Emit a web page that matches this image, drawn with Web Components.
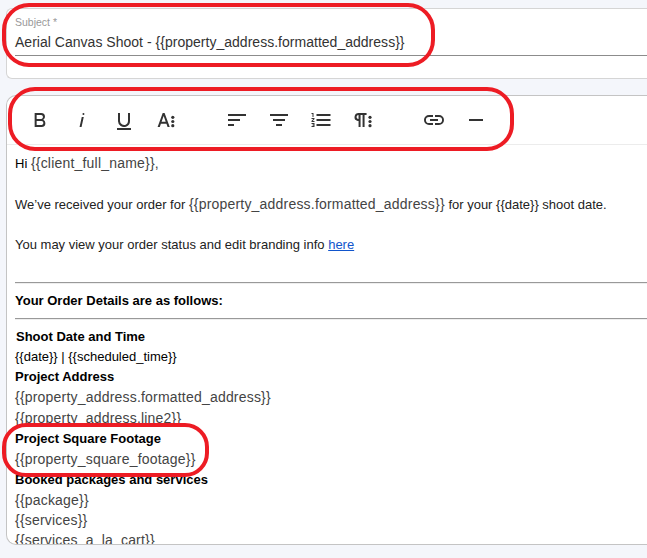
<!DOCTYPE html>
<html lang="en">
<head>
<meta charset="utf-8">
<title>Email template</title>
<style>
html,body{margin:0;height:100%;overflow:hidden;background:#f4f6fb}
body{font-family:"Liberation Sans",Arial,sans-serif;color:#222}
</style>
</head>
<body>
<template-editor></template-editor>
<script>
const define = (name, html, after) => customElements.define(name, class extends HTMLElement {
  connectedCallback() {
    if (this.shadowRoot) return;
    this.attachShadow({mode: 'open'}).innerHTML = html;
    if (after) after(this, this.shadowRoot);
  }
});

const ICONS = {
  bold: 'M15.25,11.8A3.68,3.68,0,0,0,17,9a3.93,3.93,0,0,0-3.86-4H6.65V19h7a3.74,3.74,0,0,0,3.7-3.78V15.1A3.64,3.64,0,0,0,15.25,11.8ZM8.65,7h4.2a2.09,2.09,0,0,1,2,1.3,2.09,2.09,0,0,1-1.37,2.61,2.23,2.23,0,0,1-.63.09H8.65Zm4.6,10H8.65V13h4.6a2.09,2.09,0,0,1,2,1.3,2.09,2.09,0,0,1-1.37,2.61A2.23,2.23,0,0,1,13.25,17Z',
  italic: 'M11.76,9h2l-2.2,10h-2ZM13.44,5a1,1,0,1,0,1,1,1,1,0,0,0-1-1Z',
  underline: 'M19,20v2H5V20ZM16,13.2a4,4,0,0,1-5.74,3.4A3.75,3.75,0,0,1,8,13.08V5H6v8.2a6,6,0,0,0,8,5.44A5.85,5.85,0,0,0,18,13V5H16Z',
  textMore: 'M13.55,19h2.2L10.6,5H8.7L3.6,19h2.2l1.1-3.2h5.55ZM7.6,13.8,9.65,7.9l2.05,5.9Z',
  left: 'M3,18h6V16H3ZM3,6V8H21V6ZM3,13H15V11H3Z',
  center: 'M9,18h6V16H9ZM6,11v2H18V11ZM3,6V8H21V6Z',
  list: 'M2.5,16h2v.5h-1v1h1V18h-2v1h3V15h-3ZM3.5,9h1V5h-2V6h1ZM2.5,11H4.3L2.5,13.1V14h3V13H3.7l1.8-2.1V10h-3ZM7.5,6V8h14V6ZM7.5,18h14V16H7.5ZM7.5,13h14V11H7.5Z',
  paragraph: 'M7.68,5A4.11,4.11,0,0,0,3.61,8.18,4,4,0,0,0,6.72,12.9a3.77,3.77,0,0,0,.85.1v6h2V7h2V19h2V7h2V5ZM5.53,9a2,2,0,0,1,2-2v4A2,2,0,0,1,5.53,9Z',
  link: 'M3.9,12A3.1,3.1,0,0,1,7,8.9h4V7H7A5,5,0,0,0,7,17h4V15.1H7A3.1,3.1,0,0,1,3.9,12ZM8,13h8V11H8ZM17,7H13V8.9h4a3.1,3.1,0,0,1,0,6.2H13V17h4A5,5,0,0,0,17,7Z',
  rule: 'M5,11h14v2H5Z'
};
define('tool-icon', `<style>:host{display:block;width:24px;height:24px}svg{display:block}</style><svg width="24" height="24" viewBox="0 0 24 24" fill="#333"><path/></svg>`,
  (el, root) => {
    const n = el.getAttribute('name'), p = root.querySelector('path');
    p.setAttribute('d', ICONS[n]);
    // The "more" icons end in a column of three dots.
    const x = {textMore: 18.8, paragraph: 19}[n];
    if (x) [9.3, 13.5, 17.7].forEach(y => {
      const c = document.createElementNS('http://www.w3.org/2000/svg', 'circle');
      c.setAttribute('cx', x); c.setAttribute('cy', y); c.setAttribute('r', 1.6);
      p.after(c);
    });
  });

define('tool-bar', `<style>
:host{display:flex;align-items:center;height:48px;padding-left:21px;border-bottom:1px solid #ececec}
.g{display:flex;gap:18px;margin-right:47px}</style>
<div class="g"><tool-icon name="bold"></tool-icon><tool-icon name="italic"></tool-icon><tool-icon name="underline"></tool-icon><tool-icon name="textMore"></tool-icon></div>
<div class="g"><tool-icon name="left"></tool-icon><tool-icon name="center"></tool-icon><tool-icon name="list"></tool-icon><tool-icon name="paragraph"></tool-icon></div>
<div class="g"><tool-icon name="link"></tool-icon><tool-icon name="rule"></tool-icon></div>`);

define('text-row', `<style>
:host{display:block;height:20px;line-height:20px;font-size:13px;white-space:pre;color:#222}
:host([tall]){height:21px;line-height:21px}
:host([token]){font-size:14px;letter-spacing:.2px;color:#444}
:host([bold]){font-weight:700;color:#000}
:host([dark]){color:#000}
:host([inset]){padding-left:1px}
::slotted(a){color:#15c;text-decoration:underline}
::slotted(.token){font-size:14px;letter-spacing:.2px;color:#444}</style><slot></slot>`);

define('rule-line', `<style>:host{display:block;height:1px;background:#999;border-bottom:1px solid #eee;margin:7px 0}</style>`);

define('subject-field', `<style>
:host{display:block;box-sizing:border-box;height:71px;padding:7px 0 0 8px;border:1px solid #d5d5d5;border-right:0;border-radius:6px 0 0 6px;background:#fff}
label{display:block;font-size:10.5px;line-height:12px;color:#999}
.v{height:27px;line-height:29px;font-size:14px;letter-spacing:.02px;color:#333;white-space:pre;border-bottom:1px solid #8c8c8c}</style>
<label>Subject *</label><div class="v"><slot></slot></div>`);

define('message-body', `<style>
:host{display:block;padding:8px 0 0 8px}
.p{margin-bottom:21px}.first{margin-bottom:21px}.last{margin-bottom:27px}</style>
<text-row class="first" dark>Hi <span class="token">{{client_full_name}},</span></text-row>
<text-row class="p">We’ve received your order for <span class="token">{{property_address.formatted_address}}</span> for your {{date}} shoot date.</text-row>
<text-row class="last">You may view your order status and edit branding info <a>here</a></text-row>
<rule-line style="margin-top:0"></rule-line>
<text-row bold>Your Order Details are as follows:</text-row>
<rule-line></rule-line>
<text-row bold inset>Shoot Date and Time</text-row>
<text-row dark>{{date}} | {{scheduled_time}}</text-row>
<text-row bold>Project Address</text-row>
<text-row token tall>{{property_address.formatted_address}}</text-row>
<text-row token tall>{{property_address.line2}}</text-row>
<text-row bold>Project Square Footage</text-row>
<text-row token tall>{{property_square_footage}}</text-row>
<text-row bold>Booked packages and services</text-row>
<text-row token>{{package}}</text-row>
<text-row token>{{services}}</text-row>
<text-row token>{{services_a_la_cart}}</text-row>`);

define('message-editor', `<style>
:host{display:block;box-sizing:border-box;height:450px;border:1px solid #c4c4c4;border-right:0;border-radius:10px 0 0 10px;background:#fff;overflow:hidden}</style>
<tool-bar></tool-bar><message-body></message-body>`);

// Red rounded outline laid over the content it calls out.
define('call-out', `<style>:host{display:block;position:absolute;box-sizing:border-box;border:4px solid #ed1c24;border-radius:27px}</style>`);

define('template-editor', `<style>
:host{display:flex;flex-direction:column;gap:16px;position:relative;box-sizing:border-box;height:558px;padding:8px 0 0 6px;overflow:hidden}</style>
<subject-field>Aerial Canvas Shoot - {{property_address.formatted_address}}</subject-field>
<message-editor></message-editor>
<call-out style="left:2px;top:3px;width:433px;height:64px"></call-out>
<call-out style="left:8px;top:87px;width:506px;height:64px"></call-out>
<call-out style="left:2px;top:423px;width:207px;height:54px;border-radius:24px"></call-out>`);
</script>
</body>
</html>
